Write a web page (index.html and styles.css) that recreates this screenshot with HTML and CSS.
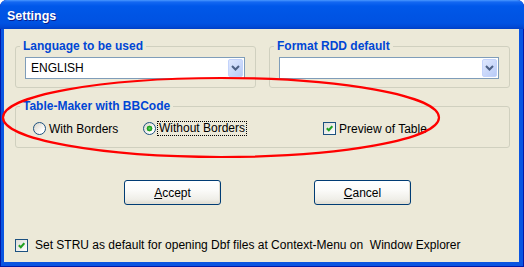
FILE: index.html
```html
<!DOCTYPE html>
<html lang="en">

<head>
    <meta charset="UTF-8">
    <title>Settings</title>
    <link rel="stylesheet" href="styles.css">
</head>

<body>

    <div class="window">
        <div class="titlebar">Settings</div>

        <div class="client">
            <div class="row">
                <div class="group half">
                    <div class="group-label">Language to be used</div>
                    <div class="combo">
                        <span class="combo-text">ENGLISH</span>
                        <span class="combo-btn">
                            <svg width="9" height="6" viewBox="0 0 9 6"><path d="M1 1 L4.5 4.5 L8 1" fill="none" stroke="#4d6185" stroke-width="2"/></svg>
                        </span>
                    </div>
                </div>
                <div class="group half">
                    <div class="group-label">Format RDD default</div>
                    <div class="combo">
                        <span class="combo-text"></span>
                        <span class="combo-btn">
                            <svg width="9" height="6" viewBox="0 0 9 6"><path d="M1 1 L4.5 4.5 L8 1" fill="none" stroke="#4d6185" stroke-width="2"/></svg>
                        </span>
                    </div>
                </div>
            </div>

            <div class="group table-maker">
                <div class="group-label">Table-Maker with BBCode</div>
                <div class="options">
                    <label class="option opt-with"><span class="radio"></span>With Borders</label>
                    <label class="option opt-without"><span class="radio checked"></span><span class="focus">Without Borders</span></label>
                    <label class="option"><span class="check"><svg width="7" height="7" viewBox="0 0 7 7"><path d="M0.8 3.2 L2.8 5.2 L6.3 1.2" fill="none" stroke="#21a121" stroke-width="2"/></svg></span>Preview of Table</label>
                </div>
            </div>

            <div class="buttons">
                <button class="btn"><u>A</u>ccept</button>
                <button class="btn"><u>C</u>ancel</button>
            </div>

            <label class="option stru"><span class="check"><svg width="7" height="7" viewBox="0 0 7 7"><path d="M0.8 3.2 L2.8 5.2 L6.3 1.2" fill="none" stroke="#21a121" stroke-width="2"/></svg></span>Set STRU as default for opening Dbf files at Context-Menu on &nbsp;Window Explorer</label>
        </div>

        <!-- red marker drawn over the dialog -->
        <svg class="mark" width="524" height="267" viewBox="0 0 524 267">
            <ellipse cx="221" cy="117.5" rx="218" ry="39.5" fill="none" stroke="#ff0000" stroke-width="2.2"/>
        </svg>
    </div>

</body>

</html>
```

FILE: styles.css
```css
* {
    box-sizing: border-box;
}

body {
    margin: 0;
    background: #fff;
    font-family: "Liberation Sans", Arial, sans-serif;
    font-size: 12px;
    color: #000;
}

.window {
    position: relative;
    width: 524px;
    height: 267px;
    display: flex;
    flex-direction: column;
    background: #0a55e1;
    border-radius: 7px 7px 0 0;
    box-shadow: inset 1px 0 #0019a8, inset -1px 0 #0019a8, inset 0 -1px #0019a8;
}

.titlebar {
    height: 29px;
    padding: 8px 0 0 7px;
    line-height: 16px;
    font-size: 12.5px;
    font-weight: bold;
    color: #fff;
    text-shadow: 1px 1px #0a1e8c;
    border-radius: 7px 7px 0 0;
    background: linear-gradient(#4a98ff 0, #1468f2 2px, #0058ea 6px, #0055e5 45%, #0052e2 80%, #0049d6 92%, #003fc6 100%);
}

.client {
    flex: 1;
    margin: 0 5px 5px 4px;
    padding: 17px 9px 0 11px;
    background: #ece9d8;
}

.row {
    display: flex;
    gap: 13px;
}

.group {
    border: 1px solid #d0d0bf;
    border-radius: 3px;
}

.half {
    flex: 1;
    padding-bottom: 8px;
}

.group-label {
    display: table;
    margin: -8px 0 0 4px;
    padding: 0 3px;
    line-height: 14px;
    font-weight: bold;
    color: #0046d5;
    background: #ece9d8;
}

.combo {
    display: flex;
    align-items: center;
    height: 22px;
    margin: 4px 10px 0 9px;
    padding: 1px;
    border: 1px solid #7f9db9;
    background: #fff;
}

.combo-text {
    flex: 1;
    padding-left: 4px;
}

.combo-btn {
    width: 15px;
    height: 18px;
    display: flex;
    align-items: center;
    justify-content: center;
    border: 1px solid #c3d3fb;
    border-radius: 2px;
    background: linear-gradient(135deg, #dfe8fe, #b8cbf7);
}

.table-maker {
    margin-top: 18px;
    padding-bottom: 11px;
}

.options {
    display: flex;
    align-items: center;
    height: 15px;
    margin: 8px 0 0 17px;
}

.option {
    display: flex;
    align-items: center;
    gap: 3px;
}

.opt-with {
    width: 110px;
}

.opt-without {
    width: 180px;
    gap: 1px;
}

.focus {
    border: 1px dotted #000;
    padding: 0 1px;
    line-height: 13px;
}

.radio {
    width: 13px;
    height: 13px;
    border: 1px solid #1c5180;
    border-radius: 50%;
    background: linear-gradient(135deg, #d6d3c6, #fff 75%);
}

.radio.checked {
    background: radial-gradient(circle at 50% 50%, #62d865 0, #21a121 2px, #21a121 2.6px, transparent 3.2px), linear-gradient(135deg, #d6d3c6, #fff 75%);
}

.check {
    width: 13px;
    height: 13px;
    display: flex;
    align-items: center;
    justify-content: center;
    border: 1px solid #1c5180;
    background: linear-gradient(135deg, #dcdcd7, #fff);
}

.buttons {
    display: flex;
    gap: 93px;
    margin-top: 32px;
    padding-left: 109px;
}

.btn {
    width: 97px;
    height: 25px;
    padding: 0;
    display: flex;
    align-items: center;
    justify-content: center;
    font: inherit;
    color: #000;
    border: 1px solid #003c74;
    border-radius: 3px;
    background: linear-gradient(#fff 0, #fbfbf9 40%, #efeee8 80%, #dedbd0 100%);
    box-shadow: inset -1px -1px #e3e0d5;
}

.stru {
    margin-top: 33px;
    gap: 7px;
    height: 14px;
}

.mark {
    position: absolute;
    left: 0;
    top: 0;
    pointer-events: none;
}
```
